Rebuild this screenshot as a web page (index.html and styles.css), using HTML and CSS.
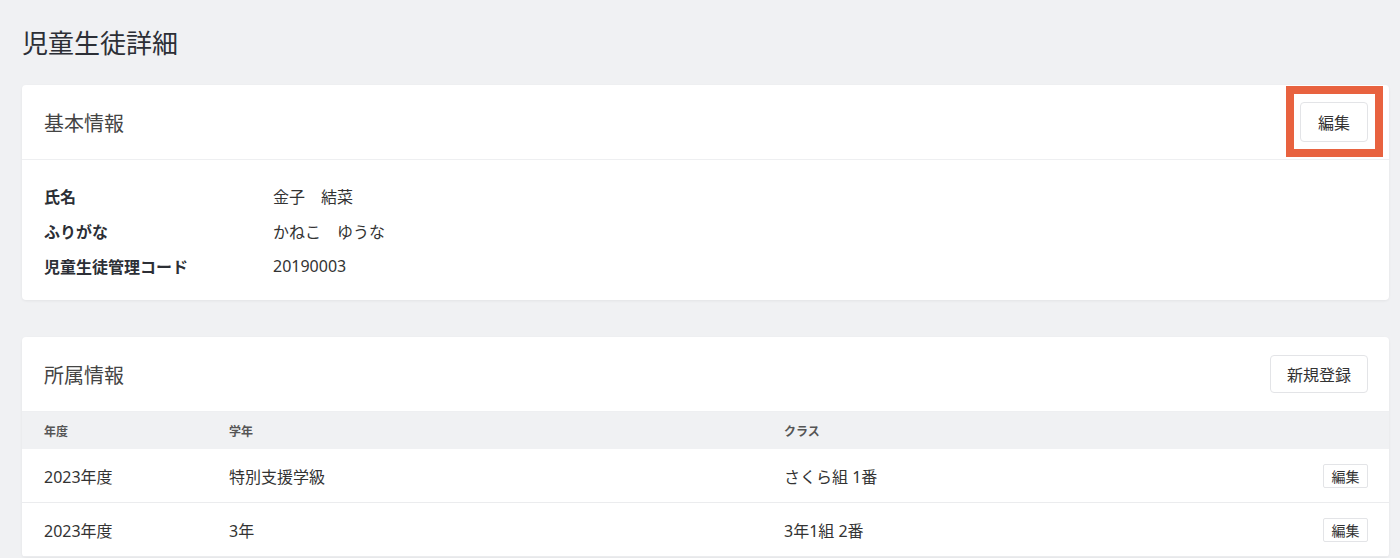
FILE: index.html
```html
<!DOCTYPE html>
<html lang="ja">

<head>
    <meta charset="UTF-8">
    <meta name="viewport" content="width=device-width, initial-scale=1.0">
    <title>児童生徒詳細</title>
    <link rel="stylesheet" href="styles.css">
</head>

<body>

    <div class="page">
        <h1 class="page-title">児童生徒詳細</h1>

        <!-- 基本情報 -->
        <section class="card">
            <div class="card-header">
                <h2>基本情報</h2>
                <span class="highlight">
                    <button class="btn">編集</button>
                </span>
            </div>
            <div class="card-body">
                <div class="info-row">
                    <span class="info-label">氏名</span>
                    <span class="info-value">金子　結菜</span>
                </div>
                <div class="info-row">
                    <span class="info-label">ふりがな</span>
                    <span class="info-value">かねこ　ゆうな</span>
                </div>
                <div class="info-row">
                    <span class="info-label">児童生徒管理コード</span>
                    <span class="info-value">20190003</span>
                </div>
            </div>
        </section>

        <!-- 所属情報 -->
        <section class="card">
            <div class="card-header">
                <h2>所属情報</h2>
                <button class="btn btn-wide">新規登録</button>
            </div>
            <div class="table">
                <div class="table-row table-head">
                    <span>年度</span>
                    <span>学年</span>
                    <span>クラス</span>
                    <span></span>
                </div>
                <div class="table-row">
                    <span>2023年度</span>
                    <span>特別支援学級</span>
                    <span>さくら組 1番</span>
                    <span class="actions"><button class="btn btn-small">編集</button></span>
                </div>
                <div class="table-row">
                    <span>2023年度</span>
                    <span>3年</span>
                    <span>3年1組 2番</span>
                    <span class="actions"><button class="btn btn-small">編集</button></span>
                </div>
            </div>
        </section>
    </div>

</body>

</html>
```

FILE: styles.css
```css
/* 児童生徒詳細ページ */
body {
    font-family: "Noto Sans", "Noto Sans CJK JP", sans-serif;
    background-color: #f0f1f3;
    color: #333;
    margin: 0;
    padding: 0;
    height: 558px;
    overflow: hidden;
}

.page {
    padding: 25px 11px 0 22px;
}

.page-title {
    font-size: 26px;
    font-weight: normal;
    color: #2c2f36;
    margin: 0 0 23px 0;
    line-height: 37px;
}

.card {
    background-color: #fff;
    border-radius: 4px;
    box-shadow: 0 1px 3px rgba(0, 0, 0, 0.06);
    margin-bottom: 37px;
}

.card-header {
    height: 74px;
    display: flex;
    justify-content: space-between;
    align-items: center;
    padding: 0 21px 0 22px;
    border-bottom: 1px solid #eeeff1;
}

.card-header h2 {
    font-size: 20px;
    font-weight: normal;
    color: #444;
    margin: 0;
}

.btn {
    font-family: inherit;
    background-color: #fff;
    border: 1px solid #e3e4e7;
    border-radius: 4px;
    color: #333;
    font-size: 16px;
    height: 40px;
    width: 68px;
    padding: 0;
    cursor: pointer;
}

.btn-wide {
    width: 98px;
    height: 38px;
}

.btn-small {
    width: 45px;
    height: 24px;
    font-size: 14px;
    border-radius: 2px;
}

/* 注目枠 */
.highlight {
    position: relative;
    display: inline-flex;
}

.highlight::after {
    content: "";
    position: absolute;
    top: -16px;
    left: -14px;
    right: -15px;
    bottom: -15px;
    border: 8px solid #e8623f;
    pointer-events: none;
}

.card-body {
    padding: 18px 22px 17px 22px;
}

.info-row {
    display: flex;
    height: 35px;
    align-items: center;
    font-size: 16px;
}

.info-label {
    width: 229px;
    font-weight: bold;
    color: #2c2f36;
}

.info-value {
    color: #333;
}

.table-row {
    display: grid;
    grid-template-columns: 185px 555px 1fr 120px;
    align-items: center;
    height: 53px;
    border-bottom: 1px solid #ebecee;
    font-size: 16px;
}

.table-row span {
    padding-left: 22px;
}

.table-head {
    background-color: #f0f1f3;
    height: 37px;
    font-size: 12px;
    font-weight: bold;
    color: #555;
    border-bottom: 0;
}

.table-row .actions {
    display: flex;
    justify-content: flex-end;
    padding-right: 21px;
}
```
